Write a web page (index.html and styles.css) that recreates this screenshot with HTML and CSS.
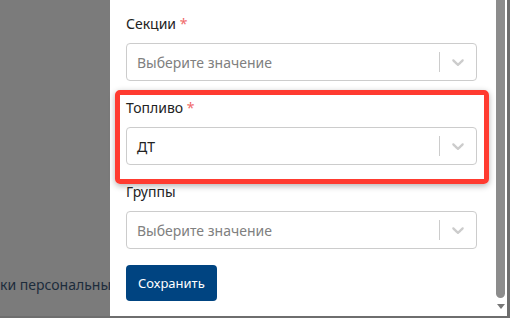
FILE: index.html
```html
<!DOCTYPE html>
<html lang="ru">
<head>
    <meta charset="UTF-8">
    <meta name="viewport" content="width=device-width, initial-scale=1.0">
    <title>Топливо</title>
    <link rel="stylesheet" href="styles.css">
</head>
<body>
    <div class="frame">
        <!-- затемнённая страница под модальным окном -->
        <div class="backdrop">
            <p class="backdrop-text">ки персональных</p>
        </div>

        <div class="modal">
            <form class="form">
                <div class="field">
                    <label class="field-label">Секции <span class="req">*</span></label>
                    <div class="select">
                        <span class="select-value placeholder">Выберите значение</span>
                        <span class="select-sep"></span>
                        <span class="select-arrow">
                            <svg width="20" height="20" viewBox="0 0 20 20"><path d="M4.516 7.548c0.436-0.446 1.043-0.481 1.576 0l3.908 3.747 3.908-3.747c0.533-0.481 1.141-0.446 1.574 0 0.436 0.445 0.408 1.197 0 1.615-0.406 0.418-4.695 4.502-4.695 4.502-0.217 0.223-0.502 0.335-0.787 0.335s-0.57-0.112-0.789-0.335c0 0-4.287-4.084-4.695-4.502s-0.436-1.17 0-1.615z"/></svg>
                        </span>
                    </div>
                </div>

                <div class="field highlighted">
                    <label class="field-label">Топливо <span class="req">*</span></label>
                    <div class="select">
                        <span class="select-value">ДТ</span>
                        <span class="select-sep"></span>
                        <span class="select-arrow">
                            <svg width="20" height="20" viewBox="0 0 20 20"><path d="M4.516 7.548c0.436-0.446 1.043-0.481 1.576 0l3.908 3.747 3.908-3.747c0.533-0.481 1.141-0.446 1.574 0 0.436 0.445 0.408 1.197 0 1.615-0.406 0.418-4.695 4.502-4.695 4.502-0.217 0.223-0.502 0.335-0.787 0.335s-0.57-0.112-0.789-0.335c0 0-4.287-4.084-4.695-4.502s-0.436-1.17 0-1.615z"/></svg>
                        </span>
                    </div>
                    <div class="highlight-box"></div>
                </div>

                <div class="field">
                    <label class="field-label">Группы</label>
                    <div class="select">
                        <span class="select-value placeholder">Выберите значение</span>
                        <span class="select-sep"></span>
                        <span class="select-arrow">
                            <svg width="20" height="20" viewBox="0 0 20 20"><path d="M4.516 7.548c0.436-0.446 1.043-0.481 1.576 0l3.908 3.747 3.908-3.747c0.533-0.481 1.141-0.446 1.574 0 0.436 0.445 0.408 1.197 0 1.615-0.406 0.418-4.695 4.502-4.695 4.502-0.217 0.223-0.502 0.335-0.787 0.335s-0.57-0.112-0.789-0.335c0 0-4.287-4.084-4.695-4.502s-0.436-1.17 0-1.615z"/></svg>
                        </span>
                    </div>
                </div>

                <button type="button" class="save-button">Сохранить</button>
            </form>
        </div>

        <div class="scrollbar">
            <div class="scroll-thumb"></div>
            <div class="scroll-down"></div>
        </div>
    </div>
</body>
</html>
```

FILE: styles.css
```css
html, body {
    margin: 0;
    padding: 0;
}
body {
    font-family: "Noto Sans", "Open Sans", sans-serif;
    font-size: 14px;
    color: #222;
    background: #fff;
}
.frame {
    display: flex;
    width: 507px;
    height: 316px;
    border-right: 3px solid #6e6e6e;
    border-bottom: 2px solid #6e6e6e;
    overflow: hidden;
}
.backdrop {
    width: 110px;
    flex: none;
    background-color: #7b7b7b;
    overflow: hidden;
    display: flex;
    flex-direction: column;
    justify-content: flex-end;
}
.backdrop-text {
    margin: 0 0 22px 0;
    white-space: nowrap;
    font-size: 14px;
    color: #1d2c3b;
}
.modal {
    flex: 1;
    background: #fff;
    padding: 14px 19px 0 16px;
}
.form {
    display: flex;
    flex-direction: column;
    gap: 17px;
}
.field {
    position: relative;
}
.field-label {
    display: block;
    line-height: 20px;
    margin-bottom: 9px;
    color: #222;
}
.req {
    color: #f06a6a;
}
.select {
    display: flex;
    align-items: center;
    height: 38px;
    box-sizing: border-box;
    border: 1px solid #ccc;
    border-radius: 4px;
    background: #fff;
}
.select-value {
    flex: 1;
    padding-left: 10px;
    color: #222;
}
.select-value.placeholder {
    color: #808080;
}
.select-sep {
    width: 1px;
    align-self: stretch;
    margin: 8px 0;
    background-color: #ccc;
}
.select-arrow {
    display: flex;
    padding: 8px;
    fill: #ccc;
}
/* красная рамка-выделение поверх поля */
.highlight-box {
    position: absolute;
    top: -8px;
    left: -11px;
    right: -12px;
    bottom: -19px;
    border: 5px solid #ff3b30;
    border-radius: 5px;
    box-shadow: 0 2px 6px rgba(0, 0, 0, 0.3);
    pointer-events: none;
}
.save-button {
    align-self: flex-start;
    height: 36px;
    padding: 0 12px;
    margin-top: -1px;
    font-family: inherit;
    font-size: 13px;
    color: #fff;
    background-color: #004481;
    border: none;
    border-radius: 4px;
    cursor: pointer;
}
.scrollbar {
    width: 11px;
    flex: none;
    display: flex;
    flex-direction: column;
    align-items: flex-start;
    background: #fff;
}
.scroll-thumb {
    width: 9px;
    height: 298px;
    background-color: #8c8c8c;
    border-radius: 0 0 5px 5px;
}
.scroll-down {
    margin: 6px 0 0 1px;
    width: 0;
    height: 0;
    border-left: 4px solid transparent;
    border-right: 4px solid transparent;
    border-top: 5px solid #777;
}
```
